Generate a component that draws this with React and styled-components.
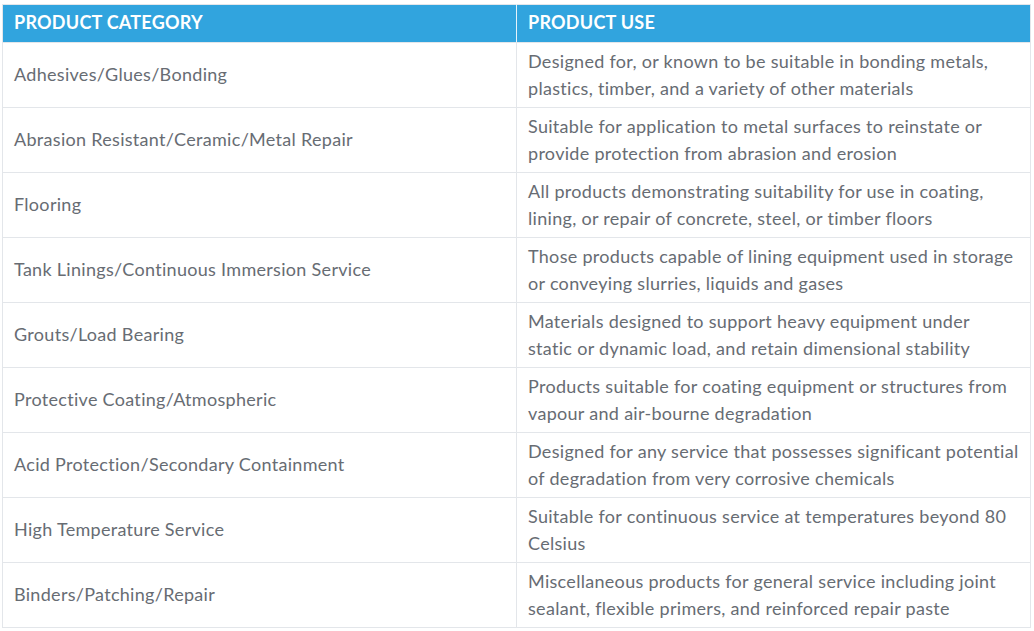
import React from "react";
import styled, { createGlobalStyle } from "styled-components";

const Global = createGlobalStyle`
  html, body { margin: 0; padding: 0; background: #fff; }
  body { font-family: Lato, "Open Sans", sans-serif; }
`;

const Page = styled.div`
  padding: 4px 0 0 2px;
`;

const Table = styled.table`
  width: 1029px;
  border-collapse: collapse;
  border: 1px solid #e3e6ea;
  table-layout: fixed;
`;

const HeadCell = styled.th`
  background: #31a4de;
  color: #fff;
  font-weight: 700;
  font-size: 18px;
  text-align: left;
  text-transform: uppercase;
  height: 38px;
  padding: 0 11px 3px;
  box-sizing: border-box;
  border-left: 1px solid ${(p) => (p.$first ? "#e3e6ea" : "#e6f3fb")};
  border-bottom: 1px solid #e3e6ea;
  letter-spacing: 0.25px;
  width: ${(p) => p.$w};
`;

const Row = styled.tr`
  height: 65px;
`;

const Cell = styled.td`
  color: #676c73;
  font-size: 18px;
  letter-spacing: 0.3px;
  line-height: 27px;
  padding: 4px 11.5px 5px 11px;
  border: 1px solid #e3e6ea;
  vertical-align: middle;
`;

const rows = [
  ["Adhesives/Glues/Bonding", "Designed for, or known to be suitable in bonding metals, plastics, timber, and a variety of other materials"],
  ["Abrasion Resistant/Ceramic/Metal Repair", "Suitable for application to metal surfaces to reinstate or provide protection from abrasion and erosion"],
  ["Flooring", "All products demonstrating suitability for use in coating, lining, or repair of concrete, steel, or timber floors"],
  ["Tank Linings/Continuous Immersion Service", "Those products capable of lining equipment used in storage or conveying slurries, liquids and gases"],
  ["Grouts/Load Bearing", "Materials designed to support heavy equipment under static or dynamic load, and retain dimensional stability"],
  ["Protective Coating/Atmospheric", "Products suitable for coating equipment or structures from vapour and air-bourne degradation"],
  ["Acid Protection/Secondary Containment", "Designed for any service that possesses significant potential of degradation from very corrosive chemicals"],
  ["High Temperature Service", "Suitable for continuous service at temperatures beyond 80 Celsius"],
  ["Binders/Patching/Repair", "Miscellaneous products for general service including joint sealant, flexible primers, and reinforced repair paste"],
];

export default function App() {
  return (
    <Page>
      <Global />
      <Table>
        <thead>
          <tr>
            <HeadCell $first $w="514px">Product Category</HeadCell>
            <HeadCell>Product Use</HeadCell>
          </tr>
        </thead>
        <tbody>
          {rows.map(([cat, use]) => (
            <Row key={cat}>
              <Cell>{cat}</Cell>
              <Cell>{use}</Cell>
            </Row>
          ))}
        </tbody>
      </Table>
    </Page>
  );
}
